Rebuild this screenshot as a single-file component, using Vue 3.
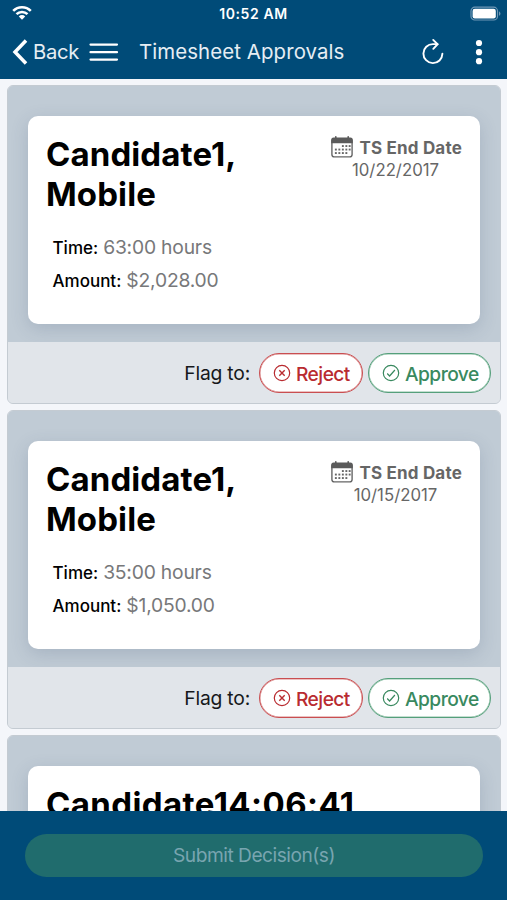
<script setup>
const timesheets = [
  { id: 1, name: 'Candidate1, Mobile', time: '63:00 hours', amount: '$2,028.00', date: '10/22/2017' },
  { id: 2, name: 'Candidate1, Mobile', time: '35:00 hours', amount: '$1,050.00', date: '10/15/2017' },
  { id: 3, name: 'Candidate14:06:41', wide: true },
]
const dots = [
  [11.8, 10], [15.3, 10], [18.6, 10],
  [4.8, 13.5], [8.3, 13.5], [11.8, 13.5], [15.3, 13.5], [18.6, 13.5],
  [4.8, 17], [8.3, 17], [11.8, 17], [15.3, 17],
]
</script>

<template>
  <div class="screen">
    <header class="header">
      <div class="status">
        <svg class="wifi" width="20" height="16" viewBox="0 0 20 16">
          <g fill="none" stroke="#fff" stroke-width="2.5">
            <path d="M1.2 5.9a12.2 12.2 0 0 1 17.6 0" />
            <path d="M4.5 9.2a7.7 7.7 0 0 1 11 0" />
          </g>
          <path d="M6.8 11.4a4.5 4.5 0 0 1 6.4 0L10 14.7z" fill="#fff" />
        </svg>
        <span class="clock">10:52 AM</span>
        <svg class="battery" width="32" height="16" viewBox="0 0 32 16">
          <rect x="1" y="1.2" width="26.5" height="12.8" rx="3.8" fill="none" stroke="#6f98b5" stroke-width="1.2" />
          <rect x="2.6" y="2.8" width="23.2" height="9.6" rx="2.2" fill="#fff" />
          <path d="M29 5.2q3 2.4 0 4.8z" fill="#6f98b5" />
        </svg>
      </div>
      <nav class="nav">
        <svg class="chevron" width="16" height="28" viewBox="0 0 16 28">
          <path d="M14 2.5 3 14l11 11.5" fill="none" stroke="#fff" stroke-width="3.5" />
        </svg>
        <span class="back">Back</span>
        <svg class="menu" width="30" height="20" viewBox="0 0 30 20">
          <path d="M1.5 2.6h26.5M1.5 10.2h26.5M1.5 17.6h26.5" stroke="#fff" stroke-width="2.2" stroke-linecap="round" />
        </svg>
        <h1 class="title">Timesheet Approvals</h1>
        <svg class="refresh" width="24" height="28" viewBox="0 0 24 28">
          <g fill="none" stroke="#fff" stroke-width="1.9" stroke-linecap="round">
            <path d="M21.4 15.8A9.5 9.5 0 1 1 12 6.1h4.4" />
            <path d="m12.2 1.9 4.4 4.3-4.3 4.6" />
          </g>
        </svg>
        <svg class="more" width="8" height="28" viewBox="0 0 8 28">
          <circle v-for="y in [5, 14.2, 23.2]" :key="y" cx="4" :cy="y" r="3.1" fill="#fff" />
        </svg>
      </nav>
    </header>

    <main class="list">
      <article v-for="sheet in timesheets" :key="sheet.id" class="card">
        <div class="backdrop">
          <section class="details">
            <div class="summary">
              <h2 class="name" :class="{ wide: sheet.wide }">{{ sheet.name }}</h2>
              <div v-if="sheet.date" class="end">
                <div class="end-label">
                  <svg width="22" height="22" viewBox="0 0 22 22">
                    <rect x=".9" y="2.6" width="20.2" height="18.3" rx="2.4" fill="none" stroke="#666" stroke-width="1.4" />
                    <path d="M.2 7.2V4Q.2 1.6 2.6 1.6h16.8q2.4 0 2.4 2.4v3.2z" fill="#5b5b5b" />
                    <path d="M4.8.8v3M17.2.8v3" stroke="#5b5b5b" stroke-width="1.6" stroke-linecap="round" />
                    <rect v-for="([x, y], i) in dots" :key="i" :x="x - 0.9" :y="y - 0.9" width="1.9" height="1.9" fill="#666" />
                  </svg>
                  <strong>TS End Date</strong>
                </div>
                <span class="date">{{ sheet.date }}</span>
              </div>
            </div>
            <dl v-if="sheet.time" class="facts">
              <div class="fact"><dt>Time:</dt><dd>{{ sheet.time }}</dd></div>
              <div class="fact"><dt>Amount:</dt><dd>{{ sheet.amount }}</dd></div>
            </dl>
          </section>
        </div>
        <footer v-if="sheet.time" class="actions">
          <span class="flag">Flag to:</span>
          <button class="pill reject">
            <svg width="18" height="18" viewBox="0 0 18 18" fill="none" stroke="currentColor" stroke-width="1.2">
              <circle cx="9" cy="9" r="7.7" />
              <path d="m6.3 6.3 5.4 5.4m0-5.4-5.4 5.4" stroke-width="1.4" />
            </svg>
            <span>Reject</span>
          </button>
          <button class="pill approve">
            <svg width="18" height="18" viewBox="0 0 18 18" fill="none" stroke="currentColor" stroke-width="1.2">
              <circle cx="9" cy="9" r="7.7" />
              <path d="m5.2 9.5 2.4 2.5 5.3-6" />
            </svg>
            <span>Approve</span>
          </button>
        </footer>
      </article>
    </main>

    <div class="submit-bar">
      <button class="submit" disabled>Submit Decision(s)</button>
    </div>
  </div>
</template>

<style>
body { margin: 0; overflow: hidden; }
</style>

<style scoped>
* { box-sizing: border-box; }
.screen {
  width: 507px;
  height: 900px;
  display: flex;
  flex-direction: column;
  overflow: hidden;
  background: #f4f6fa;
  font-family: Inter, "Liberation Sans", sans-serif;
  color: #000;
}
svg { display: block; flex: none; }
h1, h2, dl, dd { margin: 0; }
span, strong, h1, h2, dt, dd { white-space: nowrap; }
.header { height: 79px; flex: none; background: #004b78; color: #fff; }
.status {
  height: 27px;
  display: grid;
  grid-template-columns: 1fr auto 1fr;
  align-items: center;
  padding: 0 8px 0 12px;
}
.clock { margin-left: -4px; font-size: 14px; font-weight: 600; letter-spacing: .6px; line-height: 20px; }
.wifi { margin-top: -1px; }
.battery { justify-self: end; margin-right: -3px; }
.nav { height: 50px; display: flex; align-items: center; padding-left: 12px; }
.back { margin-left: 5px; width: 47px; font-size: 20.2px; line-height: 26px; letter-spacing: -.3px; color: #e6eef4; }
.menu { margin-left: 9px; }
.title { margin-left: 20px; width: 205px; font-size: 20.4px; letter-spacing: .1px; font-weight: 400; line-height: 26px; color: #e6eef4; }
.refresh { margin-left: 77px; }
.more { margin-left: 30px; }
.list { flex: 1; min-height: 0; overflow: hidden; padding: 6px 6px 0 7px; display: flex; flex-direction: column; gap: 6px; }
.card { height: 319px; flex: none; border: 1px solid #c4cbd2; border-radius: 6px; overflow: hidden; background: #e1e5ea; }
.backdrop { height: 256px; padding: 29.5px 20px 18.5px; background: #c0cbd5; }
.details { height: 208px; padding: 18.5px 18px; background: #fff; border-radius: 10px; box-shadow: 0 5px 18px rgba(50, 70, 105, .18); }
.summary { height: 84px; display: flex; justify-content: space-between; }
.name { width: 240px; font-size: 33px; font-weight: 700; line-height: 40px; letter-spacing: .1px; white-space: normal; }
.name.wide { width: 400px; letter-spacing: .4px; }
.end { width: 131px; padding-top: 3px; display: flex; flex-direction: column; align-items: center; color: #666; }
.end-label { width: 131px; display: flex; gap: 6.5px; align-items: center; height: 22px; }
.end-label svg { margin-top: -2px; }
.end-label strong { font-size: 17px; font-weight: 700; line-height: 24px; letter-spacing: .18px; }
.date { margin-left: -2px; font-size: 16.8px; line-height: 22px; }
.facts { padding: 13px 0 0 6.5px; }
.fact { display: flex; align-items: baseline; height: 33px; line-height: 33px; gap: 5px; }
dt { font-size: 17px; font-weight: 500; }
dd { font-size: 19.3px; letter-spacing: -.2px; color: #77787a; }
.actions { height: 61px; display: flex; align-items: center; justify-content: flex-end; padding-right: 9px; background: #e1e5ea; }
.flag { font-size: 19.3px; letter-spacing: -.2px; margin-right: 9px; color: #16181b; }
.pill {
  height: 40px;
  border: 1px solid;
  border-radius: 20px;
  background: #fff;
  padding: 3px 0 0 13px;
  display: flex;
  align-items: center;
  font-family: inherit;
  font-size: 19.2px;
  font-weight: 500;
  letter-spacing: -.55px;
}
.pill svg { margin-right: 5px; margin-top: -2px; }
.reject { width: 104px; color: #b92b30; border-color: #c94e51; box-shadow: inset 0 0 0 .5px #d98384; }
.approve { width: 123px; margin-left: 5px; color: #39895f; border-color: #559f7b; box-shadow: inset 0 0 0 .5px #8abfa3; }
.submit-bar { height: 89px; flex: none; background: #004b78; padding: 23px 24px 0 25px; }
.submit { width: 100%; height: 43px; border: 0; border-radius: 22px; background: #206c6d; color: #79a5b0; font: 400 19.2px/43px Inter, sans-serif; letter-spacing: -.5px; padding: 0; }
</style>
